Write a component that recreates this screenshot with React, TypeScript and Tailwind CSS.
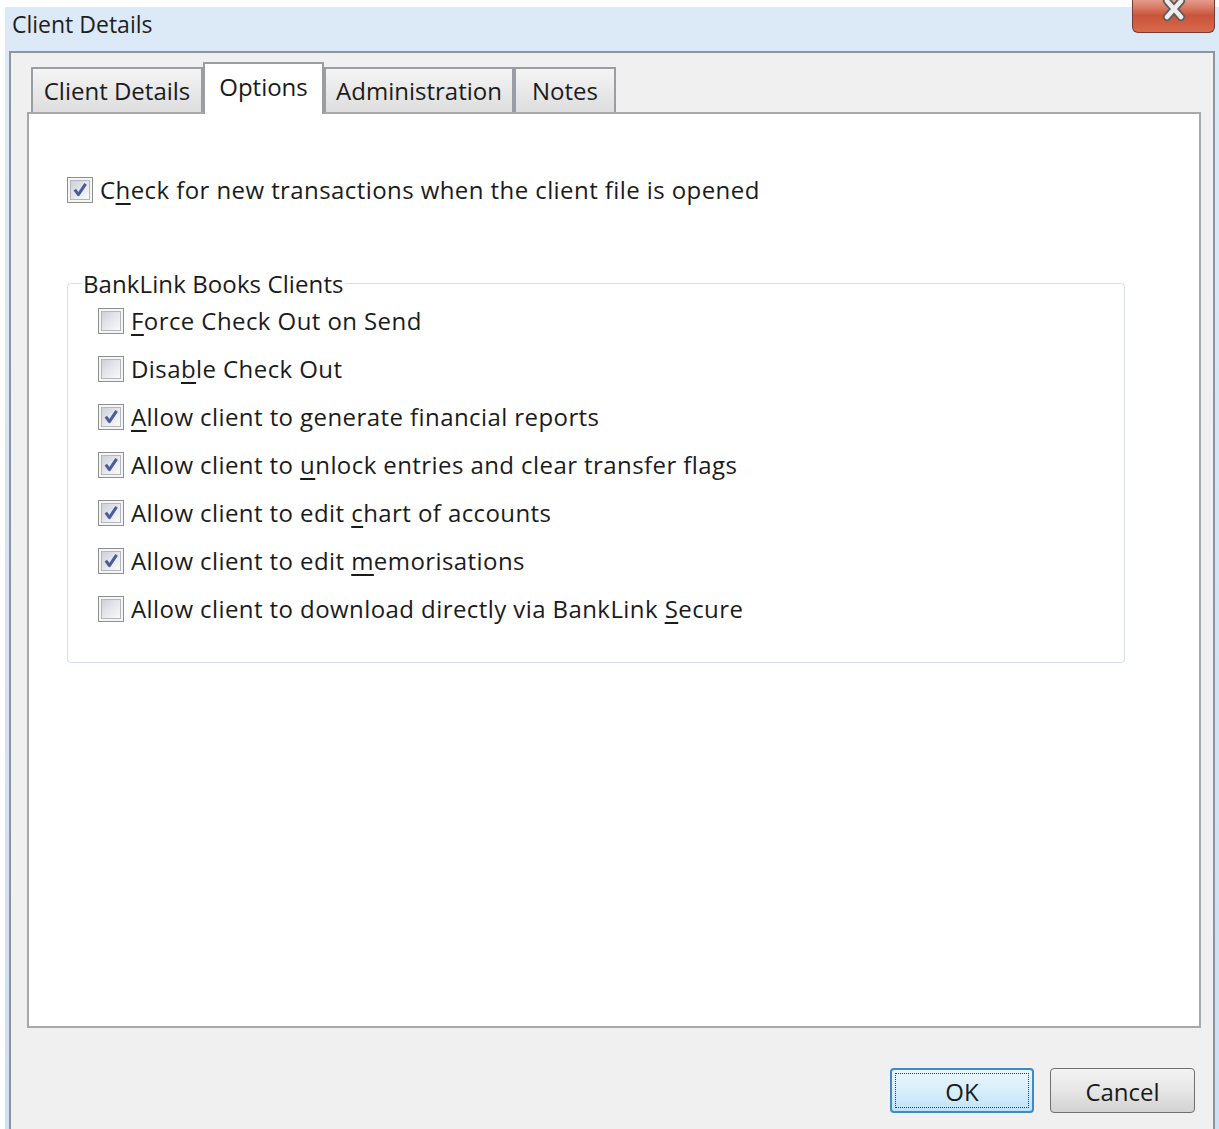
const font = "font-['Open_Sans',sans-serif]";

type Opt = { label: React.ReactNode; on: boolean };

function Key({ ch }: { ch: string }) {
  return <span className="underline decoration-[1.5px] underline-offset-[4px]">{ch}</span>;
}

function Check({ on }: { on: boolean }) {
  return (
    <span className="flex h-[26px] w-[26px] shrink-0 border border-[#8f8f8f] bg-[#f5f5f5] p-[2px]">
      <span className="flex flex-1 items-center justify-center border border-[#b3b7bd] bg-linear-to-br from-[#cdd0d7] via-[#e6e7eb] to-[#fafafa]">
        {on && (
          <svg width="18" height="18" viewBox="0 0 18 18">
            <path
              d="M3.8 8.6 L7.4 13.6 L14.6 2.8"
              fill="none"
              stroke="#4a5c9e"
              strokeWidth="3"
              strokeLinejoin="round"
            />
          </svg>
        )}
      </span>
    </span>
  );
}

function Row({ label, on }: Opt) {
  return (
    <label className="flex h-[48px] items-center gap-[7px]">
      <Check on={on} />
      <span className="leading-[32px] tracking-[0.42px]">{label}</span>
    </label>
  );
}

const books: Opt[] = [
  { label: <><Key ch="F" />orce Check Out on Send</>, on: false },
  { label: <>Disa<Key ch="b" />le Check Out</>, on: false },
  { label: <><Key ch="A" />llow client to generate financial reports</>, on: true },
  { label: <>Allow client to <Key ch="u" />nlock entries and clear transfer flags</>, on: true },
  { label: <>Allow client to edit <Key ch="c" />hart of accounts</>, on: true },
  { label: <>Allow client to edit <Key ch="m" />emorisations</>, on: true },
  { label: <>Allow client to download directly via BankLink <Key ch="S" />ecure</>, on: false },
];

function Tab({ label, width, active = false }: { label: string; width: string; active?: boolean }) {
  if (active) {
    return (
      <div
        className={`relative z-10 -mb-[2px] flex h-[52px] justify-center border-2 border-b-0 border-[#9a9ea4] bg-white pt-[7px] leading-[32px] ${width}`}
      >
        {label}
      </div>
    );
  }
  return (
    <div
      className={`flex h-[45px] justify-center border-2 border-b-0 border-[#9a9ea4] bg-linear-to-b from-[#f4f4f4] to-[#dedede] pt-[6px] leading-[32px] ${width}`}
    >
      {label}
    </div>
  );
}

export default function App() {
  return (
    <div className={`h-[1129px] w-[1219px] overflow-hidden bg-white pl-[5px] pt-[7px] text-[24px] text-[#1b1b1b] ${font}`}>
      <div className="flex h-[1122px] w-[1214px] flex-col bg-linear-to-b from-[#dce9f7] to-[#cfe0f2] px-[4px]">
        {/* title bar */}
        <div className="flex h-[44px] items-start justify-between">
          <span className="pl-[3px] text-[23px] leading-[34px] text-[#1e1e1e]">Client Details</span>
          <div className="-mt-[8px] flex h-[34px] w-[83px] items-start justify-center overflow-hidden rounded-b-[6px] border border-t-0 border-[#7a3a30] bg-linear-to-b from-[#e6a090] via-[#c9543b] to-[#d8694b]">
            <svg className="-mt-[2px]" width="28" height="26" viewBox="0 0 28 26">
              <path d="M7 4 L21 20 M21 4 L7 20" stroke="#5d5d5d" strokeWidth="8" strokeLinecap="round" />
              <path d="M7 4 L21 20 M21 4 L7 20" stroke="#ededed" strokeWidth="4.5" strokeLinecap="round" />
            </svg>
          </div>
        </div>

        {/* client area */}
        <div className="flex-1 border-2 border-b-0 border-[#8d949d] bg-[#f0f0f0] pl-[16px] pr-[12px] pt-[9px]">
          <div className="flex h-[50px] items-end pl-[4px]">
            <Tab label="Client Details" width="w-[172px]" />
            <Tab label="Options" width="w-[121px]" active />
            <Tab label="Administration" width="w-[190px]" />
            <Tab label="Notes" width="w-[102px]" />
          </div>

          <div className="h-[916px] border-2 border-[#a6a8ac] bg-white pl-[38px] pt-[52px]">
            <Row label={<>C<Key ch="h" />eck for new transactions when the client file is opened</>} on />

            <div className="mr-[74px] mt-[69px] rounded-[4px] border border-[#d5dfe5] pb-[29px]">
              <div className="-mt-[13px] ml-[14px] w-fit bg-white px-[1px] leading-[26px] tracking-[0.1px]">BankLink Books Clients</div>
              <div className="pl-[30px]">
                {books.map((b, i) => (
                  <Row key={i} label={b.label} on={b.on} />
                ))}
              </div>
            </div>
          </div>

          <div className="mt-[40px] flex justify-end gap-[16px] pr-[6px]">
            <button className="flex h-[45px] w-[144px] rounded-[4px] border-2 border-[#3d8ac6] bg-linear-to-b from-[#eaf6fd] via-[#d9eefb] to-[#bfe2f8] p-[3px]">
              <span className="flex flex-1 items-center justify-center border border-dotted border-[#3a3a3a] pt-[2px] leading-[32px]">
                OK
              </span>
            </button>
            <button className="flex h-[45px] w-[145px] items-center justify-center rounded-[4px] border border-[#707070] bg-linear-to-b from-[#f3f3f3] via-[#e6e6e6] to-[#d2d2d2] pt-[2px] leading-[32px]">
              Cancel
            </button>
          </div>
        </div>
      </div>
    </div>
  );
}
